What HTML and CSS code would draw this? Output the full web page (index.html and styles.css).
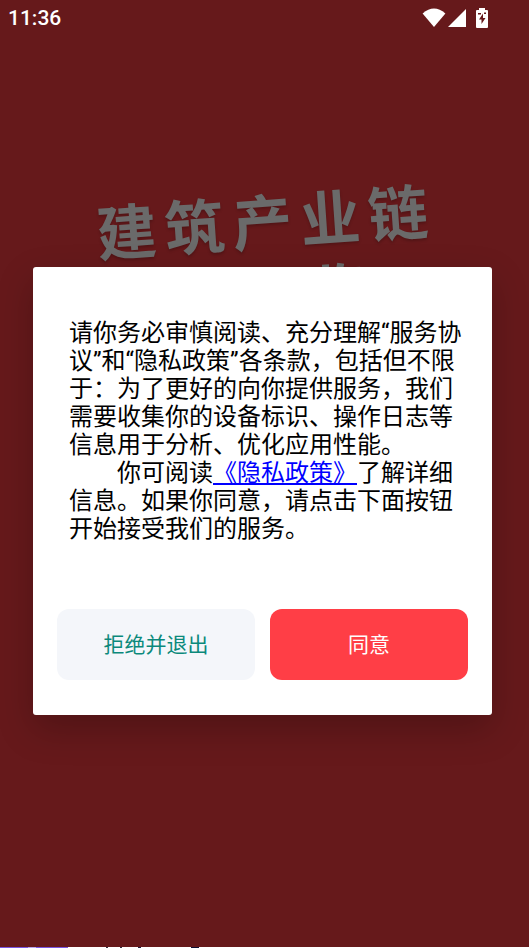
FILE: index.html
```html
<!DOCTYPE html>
<html lang="zh-CN">
<head>
<meta charset="utf-8">
<meta name="viewport" content="width=device-width, initial-scale=1">
<title>隐私政策</title>
<link rel="stylesheet" href="styles.css">
</head>
<body>
<div class="screen">
  <header class="status">
    <time class="clock">11:36</time>
    <div class="status-icons">
      <svg width="24" height="20" viewBox="0 0 24 20" aria-hidden="true"><path d="M0.6 5.6Q12-4.6 23.4 5.6L12 19Z" fill="#fff"/></svg>
      <svg width="18" height="18" viewBox="0 0 18 18" aria-hidden="true"><path d="M18 0V18H0Z" fill="#fff"/></svg>
      <svg class="battery" width="12" height="20" viewBox="0 0 12 20" aria-hidden="true"><path fill="#fff" d="M3 0H9V2H11Q12 2 12 3V19Q12 20 11 20H1Q0 20 0 19V3Q0 2 1 2H3Z"/><path fill="#66191b" d="M7 5.5V10H9.5L5.5 16V11.6H3ZM2 5H5V6.5H2ZM8 4.5H10V6H8Z"/></svg>
    </div>
  </header>
  <div class="slogan">
    <div class="slogan-line"><span>建</span><span>筑</span><span>产</span><span>业</span><span>链</span></div>
    <div class="slogan-line slogan-second"><span>览</span></div>
  </div>
  <main class="stage">
    <section class="dialog" role="dialog" aria-label="服务协议和隐私政策">
      <div class="message">
        <p>请你务必审慎阅读、充分理解“服务协议”和“隐私政策”各条款，包括但不限于：为了更好的向你提供服务，我们需要收集你的设备标识、操作日志等信息用于分析、优化应用性能。</p>
        <p class="indent">你可阅读<a href="#privacy">《隐私政策》</a>了解详细信息。如果你同意，请点击下面按钮开始接受我们的服务。</p>
      </div>
      <div class="actions">
        <button type="button" class="decline">拒绝并退出</button>
        <button type="button" class="accept">同意</button>
      </div>
    </section>
  </main>
  <div class="edge"></div>
</div>
</body>
</html>
```

FILE: styles.css
```css
* {
  box-sizing: border-box;
}

body {
  margin: 0;
  background: #66191b;
  font-family: Roboto, "Noto Sans CJK SC", sans-serif;
}

.screen {
  position: relative;
  display: flex;
  flex-direction: column;
  min-height: 100vh;
  overflow: hidden;
}

.status {
  display: flex;
  justify-content: space-between;
  align-items: center;
  height: 36px;
  padding: 0 41px 0 8px;
  color: #fff;
}

.clock {
  font-size: 21px;
  font-weight: 500;
}

.status-icons {
  display: flex;
  align-items: center;
  gap: 2px;
}

.battery {
  margin-left: 8px;
}

/* Tilted slogan that the dialog partly covers */
.slogan {
  position: absolute;
  top: 182px;
  left: 0;
  right: 0;
  transform: rotate(-4deg);
  color: #6a6a6a;
  font-family: "Noto Sans CJK SC", sans-serif;
  font-size: 60px;
  font-weight: 700;
  line-height: 74px;
  text-shadow: 0 2px 3px rgba(0, 0, 0, 0.2);
}

.slogan-line {
  display: flex;
  justify-content: center;
  gap: 8px;
}

.slogan-second {
  padding-left: 136px;
}

.stage {
  flex: 1;
  display: flex;
  align-items: center;
  padding: 0 37px 2px 33px;
}

.dialog {
  position: relative;
  flex: 1;
  padding: 48px 24px 35px;
  border-radius: 3px;
  background: #fff;
  box-shadow: 0 14px 36px rgba(0, 0, 0, 0.22);
}

.message {
  padding: 4px 0 0 12px;
  color: #000;
  font-size: 24px;
  line-height: 28px;
}

.message p {
  margin: 0;
}

.message .indent {
  text-indent: 2em;
}

.message a {
  color: #00f;
}

.actions {
  display: flex;
  gap: 15px;
  margin-top: 66px;
}

.actions button {
  flex: 1;
  height: 71px;
  padding: 0 0 2px;
  border: 0;
  border-radius: 12px;
  font: inherit;
  font-size: 21px;
}

.decline {
  background: #f4f6fa;
  color: #0b897b;
}

.accept {
  background: #ff3e46;
  color: #fff;
}

/* Sliver of the page beneath the screen */
.edge {
  height: 1px;
  background: linear-gradient(90deg, #7a55e0 28px, #b9a6ee 28px 36px, #7a55e0 36px 68px, #fff 68px 106px, #334 106px 108px, #fff 108px 120px, #334 120px 122px, #fff 122px 138px, #224 138px 141px, #fff 141px 191px, #113 191px 199px, #fff 199px);
}
```
